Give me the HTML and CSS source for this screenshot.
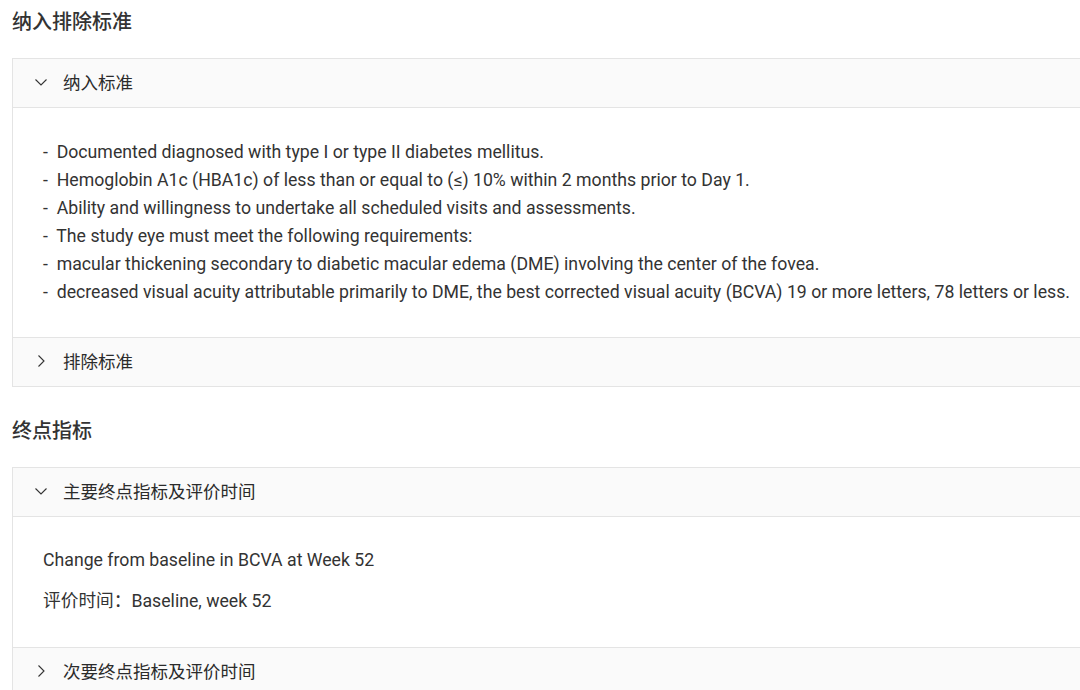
FILE: index.html
```html
<!DOCTYPE html>
<html>
<head>
    <meta charset="utf-8">
    <link rel="stylesheet" href="styles.css">
</head>
<body>
    <div class="page">
        <section class="section">
            <h2 class="section-title">纳入排除标准</h2>
            <div class="collapse">
                <div class="collapse-item open">
                    <div class="collapse-header">
                        <svg class="arrow" viewBox="0 0 12 12"><path d="M0.5 3.5 L6 9 L11.5 3.5"/></svg>
                        <span>纳入标准</span>
                    </div>
                    <div class="collapse-body">
                        <div class="lines">-  Documented diagnosed with type I or type II diabetes mellitus.
-  Hemoglobin A1c (HBA1c) of less than or equal to (≤) 10% within 2 months prior to Day 1.
-  Ability and willingness to undertake all scheduled visits and assessments.
-  The study eye must meet the following requirements:
-  macular thickening secondary to diabetic macular edema (DME) involving the center of the fovea.
-  decreased visual acuity attributable primarily to DME, the best corrected visual acuity (BCVA) 19 or more letters, 78 letters or less.</div>
                    </div>
                </div>
                <div class="collapse-item">
                    <div class="collapse-header">
                        <svg class="arrow" viewBox="0 0 12 12"><path d="M3.5 0.5 L9 6 L3.5 11.5"/></svg>
                        <span>排除标准</span>
                    </div>
                </div>
            </div>
        </section>

        <section class="section">
            <h2 class="section-title">终点指标</h2>
            <div class="collapse">
                <div class="collapse-item open">
                    <div class="collapse-header">
                        <svg class="arrow" viewBox="0 0 12 12"><path d="M0.5 3.5 L6 9 L11.5 3.5"/></svg>
                        <span>主要终点指标及评价时间</span>
                    </div>
                    <div class="collapse-body">
                        <p class="para">Change from baseline in BCVA at Week 52</p>
                        <p class="para">评价时间：Baseline, week 52</p>
                    </div>
                </div>
                <div class="collapse-item">
                    <div class="collapse-header">
                        <svg class="arrow" viewBox="0 0 12 12"><path d="M3.5 0.5 L9 6 L3.5 11.5"/></svg>
                        <span>次要终点指标及评价时间</span>
                    </div>
                </div>
            </div>
        </section>
    </div>
</body>
</html>
```

FILE: styles.css
```css
:root {
    --text-main: #333333;
    --border: #e4e4e4;
    --header-bg: #fafafa;
}

* {
    margin: 0;
    padding: 0;
    box-sizing: border-box;
}

html, body {
    overflow: hidden;
    background: #ffffff;
}

body {
    font-family: Roboto, "Noto Sans CJK SC", sans-serif;
    color: var(--text-main);
    font-size: 17.7px;
}

.page {
    width: 1120px;
    padding: 0 0 0 12px;
}

.section + .section {
    margin-top: 22px;
}

.section-title {
    font-size: 20px;
    font-weight: 500;
    line-height: 28px;
    padding: 8px 0 22px;
}

.collapse {
    border: 1px solid var(--border);
    background: var(--header-bg);
}

.collapse-item + .collapse-item {
    border-top: 1px solid var(--border);
}

.collapse-header {
    display: flex;
    align-items: center;
    height: 48px;
    padding-left: 22px;
    padding-bottom: 3px;
    font-size: 17.5px;
    font-weight: 400;
    color: #2b2b2b;
}

.arrow {
    width: 12px;
    height: 12px;
    margin-right: 16px;
    fill: none;
    stroke: #333;
    stroke-width: 1.1;
}

.collapse-body {
    border-top: 1px solid var(--border);
    background: #ffffff;
    padding: 30px 0 31px 30px;
}

.lines {
    white-space: pre;
    line-height: 28px;
}

.collapse-body .para {
    line-height: 28px;
    margin-bottom: 13px;
}

.collapse-body .para:last-child {
    margin-bottom: 0;
}

.open .collapse-body:has(.para) {
    padding-top: 29px;
    padding-bottom: 32px;
}
```
